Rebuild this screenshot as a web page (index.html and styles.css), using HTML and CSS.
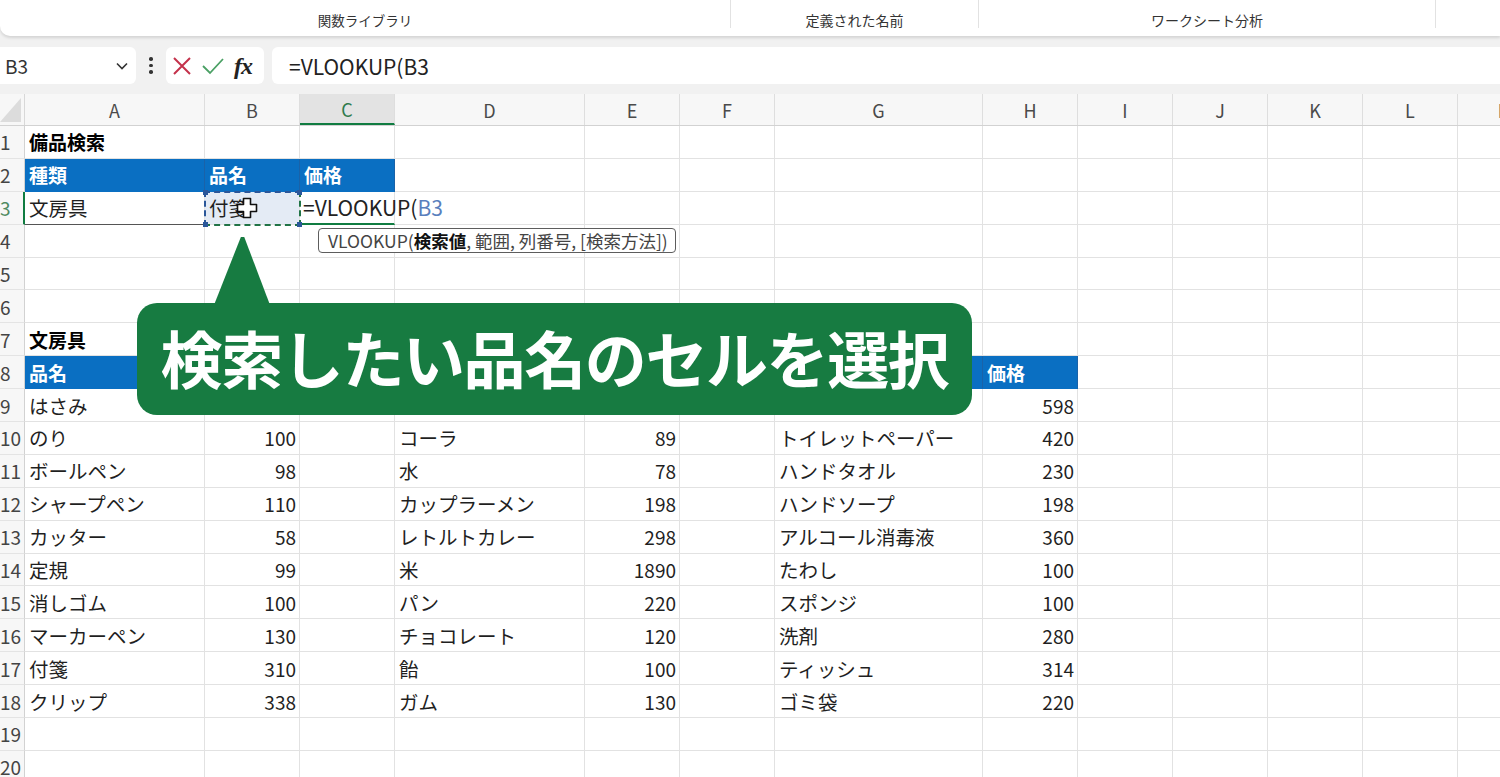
FILE: index.html
```html
<!DOCTYPE html>
<html lang="ja">
<head>
<meta charset="utf-8">
<title>備品検索</title>
<link rel="stylesheet" href="styles.css">
</head>
<body>
<div class="app">
  <div class="ribbon">
    <div class="grp g1"><span>関数ライブラリ</span></div>
    <div class="grp g2"><span>定義された名前</span></div>
    <div class="grp g3"><span>ワークシート分析</span></div>
    <div class="grp g4"></div>
  </div>

  <div class="fbar">
    <div class="namebox"><span>B3</span>
      <svg class="chev" width="12" height="8" viewBox="0 0 12 8"><path d="M1 1.5 L6 6.5 L11 1.5" fill="none" stroke="#333" stroke-width="1.6"/></svg>
    </div>
    <div class="dots"><i></i><i></i><i></i></div>
    <div class="btns">
      <svg width="20" height="20" viewBox="0 0 20 20"><path d="M2 2 L18 18 M18 2 L2 18" stroke="#c4314b" stroke-width="2" fill="none"/></svg>
      <svg width="24" height="20" viewBox="0 0 24 20"><path d="M2 10 L9 17 L22 3" stroke="#4aa064" stroke-width="1.8" fill="none"/></svg>
      <span class="fx">fx</span>
    </div>
    <div class="finput">=VLOOKUP(B3</div>
  </div>

  <div class="sheet">
    <div class="row hdr">
      <div class="corner"></div>
      <div class="ch">A</div><div class="ch">B</div><div class="ch act">C</div><div class="ch">D</div><div class="ch">E</div><div class="ch">F</div><div class="ch">G</div><div class="ch">H</div><div class="ch">I</div><div class="ch">J</div><div class="ch">K</div><div class="ch">L</div><div class="ch">M</div>
    </div>

    <div class="row"><div class="rh">1</div><div class="c b">備品検索</div><div class="c"></div><div class="c"></div><div class="c"></div><div class="c"></div><div class="c"></div><div class="c"></div><div class="c"></div><div class="c"></div><div class="c"></div><div class="c"></div><div class="c"></div><div class="c"></div></div>
    <div class="row"><div class="rh">2</div><div class="c th">種類</div><div class="c th">品名</div><div class="c th">価格</div><div class="c"></div><div class="c"></div><div class="c"></div><div class="c"></div><div class="c"></div><div class="c"></div><div class="c"></div><div class="c"></div><div class="c"></div><div class="c"></div></div>
    <div class="row"><div class="rh on">3</div><div class="c bb">文房具</div><div class="c sel">付箋</div><div class="c edit">=VLOOKUP(<span class="ref">B3</span></div><div class="c"></div><div class="c"></div><div class="c"></div><div class="c"></div><div class="c"></div><div class="c"></div><div class="c"></div><div class="c"></div><div class="c"></div><div class="c"></div></div>
    <div class="row"><div class="rh">4</div><div class="c"></div><div class="c"></div><div class="c"></div><div class="c"></div><div class="c"></div><div class="c"></div><div class="c"></div><div class="c"></div><div class="c"></div><div class="c"></div><div class="c"></div><div class="c"></div><div class="c"></div></div>
    <div class="row"><div class="rh">5</div><div class="c"></div><div class="c"></div><div class="c"></div><div class="c"></div><div class="c"></div><div class="c"></div><div class="c"></div><div class="c"></div><div class="c"></div><div class="c"></div><div class="c"></div><div class="c"></div><div class="c"></div></div>
    <div class="row"><div class="rh">6</div><div class="c"></div><div class="c"></div><div class="c"></div><div class="c"></div><div class="c"></div><div class="c"></div><div class="c"></div><div class="c"></div><div class="c"></div><div class="c"></div><div class="c"></div><div class="c"></div><div class="c"></div></div>
    <div class="row"><div class="rh">7</div><div class="c b">文房具</div><div class="c"></div><div class="c"></div><div class="c"></div><div class="c"></div><div class="c"></div><div class="c"></div><div class="c"></div><div class="c"></div><div class="c"></div><div class="c"></div><div class="c"></div><div class="c"></div></div>
    <div class="row"><div class="rh">8</div><div class="c th">品名</div><div class="c th"></div><div class="c"></div><div class="c th"></div><div class="c th"></div><div class="c"></div><div class="c th"></div><div class="c th">価格</div><div class="c"></div><div class="c"></div><div class="c"></div><div class="c"></div><div class="c"></div></div>
    <div class="row"><div class="rh">9</div><div class="c">はさみ</div><div class="c n"></div><div class="c"></div><div class="c"></div><div class="c n"></div><div class="c"></div><div class="c"></div><div class="c n">598</div><div class="c"></div><div class="c"></div><div class="c"></div><div class="c"></div><div class="c"></div></div>
    <div class="row"><div class="rh">10</div><div class="c">のり</div><div class="c n">100</div><div class="c"></div><div class="c">コーラ</div><div class="c n">89</div><div class="c"></div><div class="c">トイレットペーパー</div><div class="c n">420</div><div class="c"></div><div class="c"></div><div class="c"></div><div class="c"></div><div class="c"></div></div>
    <div class="row"><div class="rh">11</div><div class="c">ボールペン</div><div class="c n">98</div><div class="c"></div><div class="c">水</div><div class="c n">78</div><div class="c"></div><div class="c">ハンドタオル</div><div class="c n">230</div><div class="c"></div><div class="c"></div><div class="c"></div><div class="c"></div><div class="c"></div></div>
    <div class="row"><div class="rh">12</div><div class="c">シャープペン</div><div class="c n">110</div><div class="c"></div><div class="c">カップラーメン</div><div class="c n">198</div><div class="c"></div><div class="c">ハンドソープ</div><div class="c n">198</div><div class="c"></div><div class="c"></div><div class="c"></div><div class="c"></div><div class="c"></div></div>
    <div class="row"><div class="rh">13</div><div class="c">カッター</div><div class="c n">58</div><div class="c"></div><div class="c">レトルトカレー</div><div class="c n">298</div><div class="c"></div><div class="c">アルコール消毒液</div><div class="c n">360</div><div class="c"></div><div class="c"></div><div class="c"></div><div class="c"></div><div class="c"></div></div>
    <div class="row"><div class="rh">14</div><div class="c">定規</div><div class="c n">99</div><div class="c"></div><div class="c">米</div><div class="c n">1890</div><div class="c"></div><div class="c">たわし</div><div class="c n">100</div><div class="c"></div><div class="c"></div><div class="c"></div><div class="c"></div><div class="c"></div></div>
    <div class="row"><div class="rh">15</div><div class="c">消しゴム</div><div class="c n">100</div><div class="c"></div><div class="c">パン</div><div class="c n">220</div><div class="c"></div><div class="c">スポンジ</div><div class="c n">100</div><div class="c"></div><div class="c"></div><div class="c"></div><div class="c"></div><div class="c"></div></div>
    <div class="row"><div class="rh">16</div><div class="c">マーカーペン</div><div class="c n">130</div><div class="c"></div><div class="c">チョコレート</div><div class="c n">120</div><div class="c"></div><div class="c">洗剤</div><div class="c n">280</div><div class="c"></div><div class="c"></div><div class="c"></div><div class="c"></div><div class="c"></div></div>
    <div class="row"><div class="rh">17</div><div class="c">付箋</div><div class="c n">310</div><div class="c"></div><div class="c">飴</div><div class="c n">100</div><div class="c"></div><div class="c">ティッシュ</div><div class="c n">314</div><div class="c"></div><div class="c"></div><div class="c"></div><div class="c"></div><div class="c"></div></div>
    <div class="row"><div class="rh">18</div><div class="c">クリップ</div><div class="c n">338</div><div class="c"></div><div class="c">ガム</div><div class="c n">130</div><div class="c"></div><div class="c">ゴミ袋</div><div class="c n">220</div><div class="c"></div><div class="c"></div><div class="c"></div><div class="c"></div><div class="c"></div></div>
    <div class="row"><div class="rh">19</div><div class="c"></div><div class="c"></div><div class="c"></div><div class="c"></div><div class="c"></div><div class="c"></div><div class="c"></div><div class="c"></div><div class="c"></div><div class="c"></div><div class="c"></div><div class="c"></div><div class="c"></div></div>
    <div class="row"><div class="rh">20</div><div class="c"></div><div class="c"></div><div class="c"></div><div class="c"></div><div class="c"></div><div class="c"></div><div class="c"></div><div class="c"></div><div class="c"></div><div class="c"></div><div class="c"></div><div class="c"></div><div class="c"></div></div>
  </div>

  <!-- overlays -->
  <div class="ants"><i class="k k1"></i><i class="k k2"></i><i class="k k3"></i><i class="k k4"></i></div>
  <svg class="cursor" width="22" height="22" viewBox="0 0 22 22"><path d="M7.5 1.5 H14.5 V7.5 H20.5 V14.5 H14.5 V20.5 H7.5 V14.5 H1.5 V7.5 H7.5 Z" fill="#fff" stroke="#111" stroke-width="1.6" stroke-linejoin="round"/></svg>
  <div class="tip">VLOOKUP(<b>検索値</b>, 範囲, 列番号, [検索方法])</div>
  <div class="callout">検索したい品名のセルを選択</div>
</div>
</body>
</html>
```

FILE: styles.css
```css
* { box-sizing: border-box; }
html, body { margin: 0; padding: 0; }
body {
  width: 1500px;
  height: 777px;
  overflow: hidden;
  background: #f1f1f1;
  font-family: "Noto Sans CJK JP", "Noto Sans", sans-serif;
  color: #1a1a1a;
}
.app { position: relative; width: 1500px; height: 777px; overflow: hidden; }

/* ribbon */
.ribbon {
  height: 36px;
  background: #fff;
  border-bottom-left-radius: 10px;
  box-shadow: 0 2px 3px rgba(0,0,0,0.12);
  display: flex;
  font-size: 14px;
  color: #333;
}
.grp {
  display: flex;
  align-items: center;
  justify-content: center;
  padding-top: 4px;
  height: 36px;
}
.g1 { width: 730px; font-size: 13.5px; }
.g2 { width: 248px; border-left: 1px solid #e2e2e2; height: 28px; }
.g3 { width: 457px; border-left: 1px solid #e2e2e2; height: 28px; }
.g4 { flex: 1; border-left: 1px solid #e2e2e2; height: 28px; }
.g2, .g3 { padding-top: 12px; }

/* formula bar */
.fbar {
  margin-top: 11px;
  height: 37px;
  display: flex;
  align-items: stretch;
}
.namebox {
  width: 136px;
  background: #fff;
  border-radius: 0 6px 6px 0;
  display: flex;
  align-items: center;
  justify-content: space-between;
  padding: 0 8px 0 5px;
  font-size: 19px;
  color: #333;
}
.dots {
  width: 30px;
  display: flex;
  flex-direction: column;
  align-items: center;
  justify-content: center;
  gap: 3px;
}
.dots i { width: 3.5px; height: 3.5px; border-radius: 50%; background: #333; display: block; }
.btns {
  width: 98px;
  background: #fff;
  border-radius: 6px;
  display: flex;
  align-items: center;
  padding-left: 6px;
  gap: 9px;
}
.fx {
  font-family: "Liberation Serif", "DejaVu Serif", serif;
  font-style: italic;
  font-weight: bold;
  font-size: 24px;
  color: #222;
  letter-spacing: -1px;
  margin-left: 0;
  line-height: 1;
}
.finput {
  flex: 1;
  margin-left: 8px;
  background: #fff;
  border-radius: 6px 0 0 6px;
  display: flex;
  align-items: center;
  padding-left: 17px;
  font-size: 21px;
  color: #222;
}

/* sheet */
.sheet {
  margin-top: 10px;
  background: #fff;
  width: 1553px;
}
.row {
  display: grid;
  grid-template-columns: 25px 180px 95px 95px 190px 95px 95px 208px 95px 95px 95px 95px 95px 95px;
  height: 32.9px;
}
.row.hdr { height: 32px; background: #f7f7f7; border-bottom: 1px solid #d2d2d2; }
.corner {
  background: #f7f7f7;
  position: relative;
  border-right: 1px solid #d8d8d8;
}
.corner::after {
  content: "";
  position: absolute;
  right: 3px; bottom: 3px;
  width: 21px; height: 24px;
  background: #dcdcdc;
  clip-path: polygon(100% 0, 100% 100%, 0 100%);
}
.ch {
  border-right: 1px solid #dedede;
  display: flex;
  align-items: center;
  justify-content: center;
  font-size: 18px;
  color: #4a4a4a;
}
.ch.act {
  background: #e3e3e3;
  color: #2f7a4d;
  border-bottom: 2px solid #107c41;
}
.rh {
  background: #f7f7f7;
  border-right: 1px solid #d2d2d2;
  border-bottom: 1px solid #e4e4e4;
  font-size: 19px;
  color: #444;
  display: flex;
  align-items: center;
  overflow: hidden;
  white-space: nowrap;
}
.rh.on { color: #4f8a62; border-right: 2px solid #107c41; }
.c {
  border-right: 1px solid #e2e2e2;
  border-bottom: 1px solid #e2e2e2;
  font-size: 19.5px;
  display: flex;
  align-items: center;
  padding: 0 4px;
  white-space: nowrap;
  color: #1f1f1f;
}
.c.n { justify-content: flex-end; padding-right: 3px; font-size: 19px; }
.c.b { font-weight: bold; color: #000; font-size: 19px; }
.c.th {
  background: #0a6fc2;
  color: #fff;
  font-weight: bold;
  font-size: 19px;
  border-right-color: #1a62a8;
  border-bottom-color: #0a6fc2;
}
.c.bb { border-bottom: 1px solid #555; }
.c.sel { background: #e4ebf5; }
.c.edit {
  border-bottom: 2px solid #107c41;
  font-size: 21px;
  padding-left: 3px;
  overflow: visible;
  color: #222;
}
.ref { color: #5a7fbd; }

/* overlays */
.ants {
  position: absolute;
  left: 204px; top: 191px;
  width: 97px; height: 35px;
  border-top: 2px dashed #2b579a;
  border-left: 2px dashed #2b579a;
  border-right: 2px dashed #217346;
  border-bottom: 2px dashed #217346;
}
.k { position: absolute; width: 5px; height: 5px; background: #2b579a; display: block; }
.k1 { left: -3px; top: -3px; }
.k2 { right: -3px; top: -3px; }
.k3 { left: -3px; bottom: -3px; }
.k4 { right: -3px; bottom: -3px; }
.cursor { position: absolute; left: 236px; top: 197px; }

.tip {
  position: absolute;
  left: 318px; top: 228px;
  width: 358px; height: 25px;
  background: #fff;
  border: 1px solid #5d5d5d;
  border-radius: 4px;
  font-size: 17.5px;
  color: #444;
  padding-left: 9px;
  display: flex;
  align-items: center;
  white-space: nowrap;
  overflow: hidden;
}
.tip b { color: #111; font-weight: bold; }

.callout {
  position: absolute;
  left: 137px; top: 303px;
  width: 835px; height: 112px;
  background: #177b41;
  border-radius: 20px;
  color: #fff;
  font-weight: bold;
  font-size: 62px;
  letter-spacing: -1.4px;
  display: flex;
  align-items: center;
  justify-content: center;
  padding-bottom: 4px;
  white-space: nowrap;
}
.callout::before {
  content: "";
  position: absolute;
  left: 77px; top: -66px;
  width: 56px; height: 68px;
  background: #177b41;
  clip-path: polygon(48% 0, 54% 0, 100% 100%, 0 100%);
}
```
